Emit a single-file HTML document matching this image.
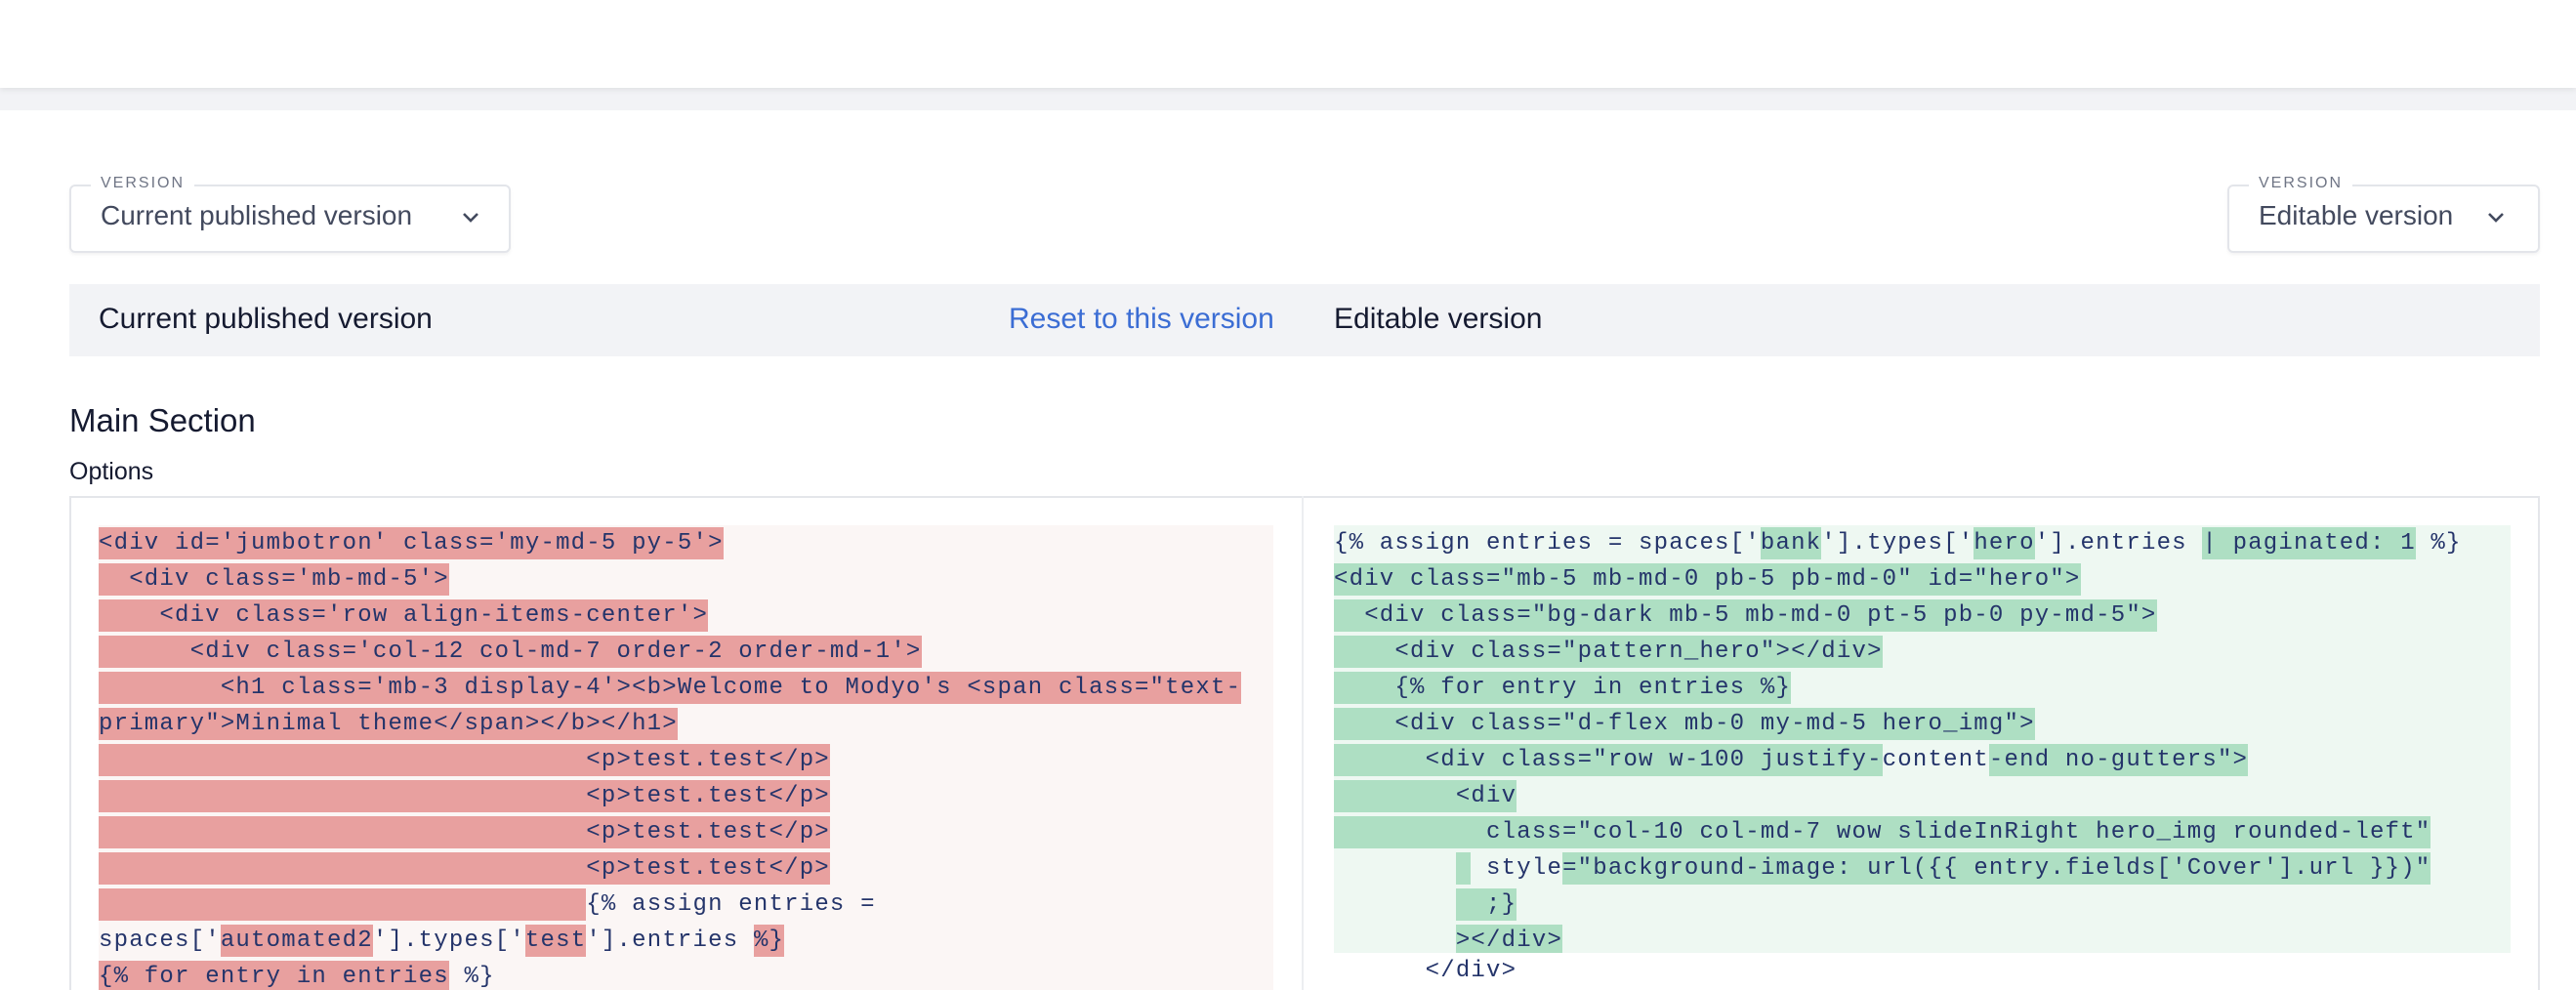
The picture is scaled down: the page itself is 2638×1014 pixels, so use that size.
<!DOCTYPE html>
<html><head><meta charset="utf-8"><style>
*{box-sizing:border-box;margin:0;padding:0}
html,body{width:2638px;height:1014px;overflow:hidden}
body{background:#fff;font-family:"Liberation Sans",sans-serif;position:relative;color:#1a2036}
.hdr{position:absolute;left:0;top:0;width:2638px;height:90px;background:#fff;box-shadow:0 2px 6px rgba(0,0,0,.08);z-index:2}
.band{position:absolute;left:0;top:90px;width:2638px;height:23px;background:#f2f3f6}
.dd{position:absolute;top:189px;height:70px;border:2px solid #e3e5ea;border-radius:6px;box-shadow:0 2px 3px rgba(0,0,0,.05);background:#fff}
.dd .lbl{position:absolute;top:-12px;left:20px;background:#fff;padding:0 10px;font-size:16px;letter-spacing:2px;color:#6f7585}
.dd .val{position:absolute;top:14px;left:30px;font-size:28px;color:#434a5e;white-space:nowrap}
.dd svg{position:absolute;top:26px}
.bar{position:absolute;left:71px;top:291px;width:2530px;height:74px;background:#f2f3f6}
.bar span{position:absolute;top:19px;font-size:30px;white-space:nowrap}
.h2{position:absolute;left:71px;top:412px;font-size:33px;color:#151a30}
.opt{position:absolute;left:71px;top:469px;font-size:25px;color:#151a30}
.box{position:absolute;left:71px;top:508px;width:2530px;height:520px;border:2px solid #e4e6ea}
.div{position:absolute;left:1333px;top:508px;width:2px;height:520px;background:#eceef1}
.code{position:absolute;font-family:"Liberation Mono",monospace;font-size:24px;letter-spacing:1.2px;color:#24346a;white-space:normal;overflow:hidden}
.lc{left:101px;top:538px;width:1203px;height:480px;background:#fbf6f5}
.rc{left:1366px;top:538px;width:1205px;height:438px;background:#eef8f2}
.ln{height:37px;line-height:37px;white-space:pre}
.ln span{display:inline-block;height:33px;line-height:33px;vertical-align:top;margin-top:2px}
.lc .h{background:#e8a09f}
.rc .h{background:#aedfc3}
</style></head><body>
<div class="hdr"></div><div class="band"></div>
<div class="dd" style="left:71px;width:452px"><div class="lbl">VERSION</div><div class="val">Current published version</div>
<svg style="left:400px" width="18" height="12" viewBox="0 0 18 12"><path d="M2 2l7 7 7-7" fill="none" stroke="#434a5e" stroke-width="2.6"/></svg></div>
<div class="dd" style="left:2281px;width:320px"><div class="lbl">VERSION</div><div class="val">Editable version</div>
<svg style="left:264px" width="18" height="12" viewBox="0 0 18 12"><path d="M2 2l7 7 7-7" fill="none" stroke="#434a5e" stroke-width="2.6"/></svg></div>
<div class="bar"><span style="left:30px;color:#151a30">Current published version</span><span style="left:962px;color:#3b6dd4">Reset to this version</span><span style="left:1295px;color:#151a30">Editable version</span></div>
<div class="h2">Main Section</div>
<div class="opt">Options</div>
<div class="box"></div><div class="div"></div>
<div class="code lc"><div class="ln"><span class="h">&lt;div id='jumbotron' class='my-md-5 py-5'&gt;</span></div><div class="ln"><span class="h">  &lt;div class='mb-md-5'&gt;</span></div><div class="ln"><span class="h">    &lt;div class='row align-items-center'&gt;</span></div><div class="ln"><span class="h">      &lt;div class='col-12 col-md-7 order-2 order-md-1'&gt;</span></div><div class="ln"><span class="h">        &lt;h1 class='mb-3 display-4'&gt;&lt;b&gt;Welcome to Modyo's &lt;span class="text-</span></div><div class="ln"><span class="h">primary"&gt;Minimal theme&lt;/span&gt;&lt;/b&gt;&lt;/h1&gt;</span></div><div class="ln"><span class="h">                                &lt;p&gt;test.test&lt;/p&gt;</span></div><div class="ln"><span class="h">                                &lt;p&gt;test.test&lt;/p&gt;</span></div><div class="ln"><span class="h">                                &lt;p&gt;test.test&lt;/p&gt;</span></div><div class="ln"><span class="h">                                &lt;p&gt;test.test&lt;/p&gt;</span></div><div class="ln"><span class="h">                                </span><span>{% assign entries =</span></div><div class="ln"><span>spaces['</span><span class="h">automated2</span><span>'].types['</span><span class="h">test</span><span>'].entries </span><span class="h">%}</span></div><div class="ln"><span class="h">{% for entry in entries</span><span> %}</span></div></div>
<div class="code rc"><div class="ln"><span>{% assign entries = spaces['</span><span class="h">bank</span><span>'].types['</span><span class="h">hero</span><span>'].entries </span><span class="h">| paginated: 1</span><span> %}</span></div><div class="ln"><span class="h">&lt;div class="mb-5 mb-md-0 pb-5 pb-md-0" id="hero"&gt;</span></div><div class="ln"><span class="h">  &lt;div class="bg-dark mb-5 mb-md-0 pt-5 pb-0 py-md-5"&gt;</span></div><div class="ln"><span class="h">    &lt;div class="pattern_hero"&gt;&lt;/div&gt;</span></div><div class="ln"><span class="h">    {% for entry in entries %}</span></div><div class="ln"><span class="h">    &lt;div class="d-flex mb-0 my-md-5 hero_img"&gt;</span></div><div class="ln"><span class="h">      &lt;div class="row w-100 justify-</span><span>content</span><span class="h">-end no-gutters"&gt;</span></div><div class="ln"><span class="h">        &lt;div</span></div><div class="ln"><span class="h">          class="col-10 col-md-7 wow slideInRight hero_img rounded-left"</span></div><div class="ln"><span>        </span><span class="h"> </span><span> style</span><span class="h">="background-image: url({{ entry.fields['Cover'].url }})"</span></div><div class="ln"><span>        </span><span class="h">  ;}</span></div><div class="ln"><span>        </span><span class="h">&gt;&lt;/div&gt;</span></div></div>
<div class="code" style="left:1366px;top:976px"><div class="ln"><span>      &lt;/div&gt;</span></div></div>
</body></html>
